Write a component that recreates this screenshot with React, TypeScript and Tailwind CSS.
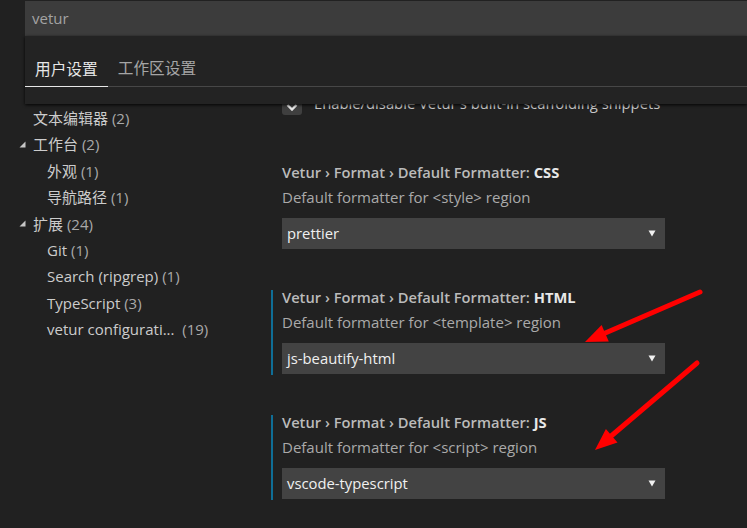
import React from "react";

const font = { fontFamily: '"Open Sans", "Noto Sans CJK SC", sans-serif' };

function Tri() {
  return (
    <svg width="7" height="7" viewBox="0 0 7 7" className="mr-[7px]">
      <polygon points="6.5,0.5 6.5,6.5 0.5,6.5" fill="#c5c5c5" />
    </svg>
  );
}

function TreeRow({ label, count, level, expand }: { label: string; count: string; level: number; expand?: boolean }) {
  return (
    <div className={`h-[26.4px] flex items-center ${level === 0 ? (expand ? "pl-[19px]" : "pl-[33px]") : "pl-[47px]"}`}>
      {expand && <Tri />}
      <span className="text-[#cccccc] whitespace-pre">{label}</span>
      <span className="text-[#a9a9a9] whitespace-pre"> {count}</span>
    </div>
  );
}

function Caret() {
  return (
    <svg width="8" height="7" viewBox="0 0 8 7">
      <polygon points="0.5,0.5 7.5,0.5 4,6.5" fill="#f0f0f0" />
    </svg>
  );
}

function Block({ kind, desc, value, active }: { kind: string; desc: string; value: string; active?: boolean }) {
  return (
    <div className={`w-[394px] border-l-2 pl-[9px] pb-[1px] ${active ? "border-[#0f6e96]" : "border-transparent"}`}>
      <div className="leading-[15px] h-[15px] font-semibold text-[#bbbbbb] whitespace-nowrap text-[14.7px]">
        Vetur › Format › Default Formatter: <span className="font-bold text-[#e8e8e8]">{kind}</span>
      </div>
      <div className="mt-[9px] leading-[16px] h-[16px] text-[#aaaaaa] whitespace-nowrap text-[15px]">{desc}</div>
      <div className="mt-[13px] h-[31px] bg-[#434343] flex items-center justify-between pl-[5px] pr-[9px]">
        <span className="text-[#f0f0f0] text-[14.8px]">{value}</span>
        <Caret />
      </div>
    </div>
  );
}

export default function App() {
  return (
    <div className="w-[747px] h-[528px] bg-[#212121] relative overflow-hidden flex flex-col text-[14px]" style={font}>
      <div className="pl-[25px] pt-[1px]">
        <div className="h-[35px] bg-[#3c3c3c] flex items-center pl-[7px] text-[#a3a3a3] text-[15px]">vetur</div>
      </div>
      <div className="ml-[25px] h-[68px] bg-[#232323] relative z-10 shadow-[0_1px_3px_rgba(0,0,0,0.9)] flex flex-col">
        <div className="h-[51px] flex items-end border-b border-[#474747]">
          <div className="px-[10px] h-[34px] flex items-center text-[15.7px] text-[#e7e7e7] border-b border-[#e7e7e7] -mb-px">用户设置</div>
          <div className="px-[10px] h-[34px] flex items-center text-[15.7px] text-[#a5a5a5]">工作区设置</div>
        </div>
      </div>
      <div className="flex-1 flex overflow-hidden">
        <div className="w-[271px] shrink-0 pt-[1px] text-[15px]">
          <TreeRow label="文本编辑器" count="(2)" level={0} />
          <TreeRow label="工作台" count="(2)" level={0} expand />
          <TreeRow label="外观" count="(1)" level={1} />
          <TreeRow label="导航路径" count="(1)" level={1} />
          <TreeRow label="扩展" count="(24)" level={0} expand />
          <TreeRow label="Git" count="(1)" level={1} />
          <TreeRow label="Search (ripgrep)" count="(1)" level={1} />
          <TreeRow label="TypeScript" count="(3)" level={1} />
          <TreeRow label="vetur configurati... " count="(19)" level={1} />
        </div>
        <div className="flex-1">
          <div className="-mt-[7px]">
            <div className="flex items-center h-[18px] pl-[11px]">
              <div className="w-[20px] h-[18px] rounded-[3px] bg-[#3f3f3f] flex items-center justify-center">
                <svg width="12" height="10" viewBox="0 0 12 10">
                  <polyline points="1.5,4 6,8.5 10.5,4" fill="none" stroke="#e6e6e6" strokeWidth="2.4" />
                </svg>
              </div>
              <span className="ml-[12px] text-[#c8c8c8] whitespace-nowrap text-[14.8px] relative -top-[3px]">Enable/disable Vetur's built-in scaffolding snippets</span>
            </div>
            <div className="mt-[50px] flex flex-col gap-[40px]">
              <Block kind="CSS" desc="Default formatter for <style> region" value="prettier" />
              <Block kind="HTML" desc="Default formatter for <template> region" value="js-beautify-html" active />
              <Block kind="JS" desc="Default formatter for <script> region" value="vscode-typescript" active />
            </div>
          </div>
        </div>
      </div>
      <svg className="absolute inset-0 pointer-events-none z-20" width="747" height="528" viewBox="0 0 747 528">
        <line x1="700" y1="292" x2="603" y2="334" stroke="#ff0000" strokeWidth="5" strokeLinecap="round" />
        <polygon points="585,342 608.8,341.5 601.6,324.9" fill="#ff0000" />
        <line x1="697" y1="363" x2="610" y2="437" stroke="#ff0000" strokeWidth="5" strokeLinecap="round" />
        <polygon points="595,450 617.5,442.5 605.9,428.9" fill="#ff0000" />
      </svg>
    </div>
  );
}
